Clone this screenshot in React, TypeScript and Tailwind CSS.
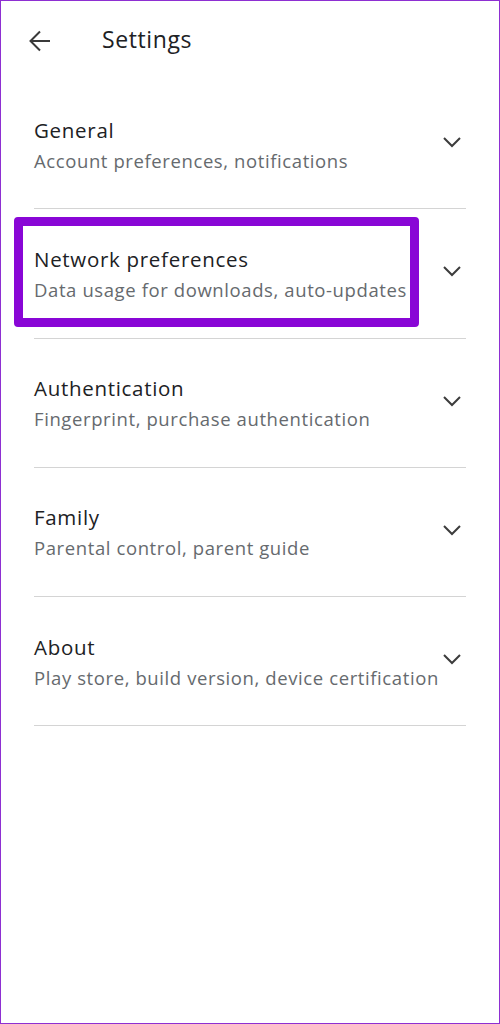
import React from "react";

const items = [
  { title: "General", sub: "Account preferences, notifications" },
  { title: "Network preferences", sub: "Data usage for downloads, auto-updates", highlight: true },
  { title: "Authentication", sub: "Fingerprint, purchase authentication" },
  { title: "Family", sub: "Parental control, parent guide" },
  { title: "About", sub: "Play store, build version, device certification" },
];

function Chevron() {
  return (
    <svg width="20" height="12" viewBox="0 0 20 12" className="shrink-0 mr-[4px] mb-[6px]">
      <polyline points="2,2 10,10 18,2" fill="none" stroke="#3c3c3c" strokeWidth="2" />
    </svg>
  );
}

export default function App() {
  return (
    <div
      className="w-[500px] h-[1024px] bg-white border border-[#8e2fd2] overflow-hidden"
      style={{ fontFamily: "'Open Sans', 'Noto Sans', sans-serif" }}
    >
      <div className="h-[79px] flex items-center">
        <svg width="24" height="24" viewBox="0 0 24 24" className="ml-[27px]">
          <path d="M22 12H3M12 2.5 2.5 12l9.5 9.5" fill="none" stroke="#3a3a3a" strokeWidth="2" />
        </svg>
        <h1 className="ml-[50px] mb-[2px] text-[23px] tracking-[0.6px] text-[#202124]">Settings</h1>
      </div>

      <div className="px-[33px]">
        {items.map((it) => (
          <div key={it.title} className="relative">
            {it.highlight && (
              <div className="absolute left-[-20px] top-[8px] w-[405px] h-[110px] border-[9px] border-[#8906d6] rounded-[4px]" />
            )}
            <div className="flex items-center pt-[35.5px] pb-[33.75px]">
              <div className="flex-1 min-w-0">
                <p className="text-[20.5px] leading-[28px] tracking-[0.7px] text-[#202124]">{it.title}</p>
                <p className="mt-[3px] text-[18.5px] leading-[28px] tracking-[0.6px] text-[#666a6e] whitespace-nowrap">
                  {it.sub}
                </p>
              </div>
              <Chevron />
            </div>
            <div className="h-px bg-[#d4d4d4]" />
          </div>
        ))}
      </div>
    </div>
  );
}
